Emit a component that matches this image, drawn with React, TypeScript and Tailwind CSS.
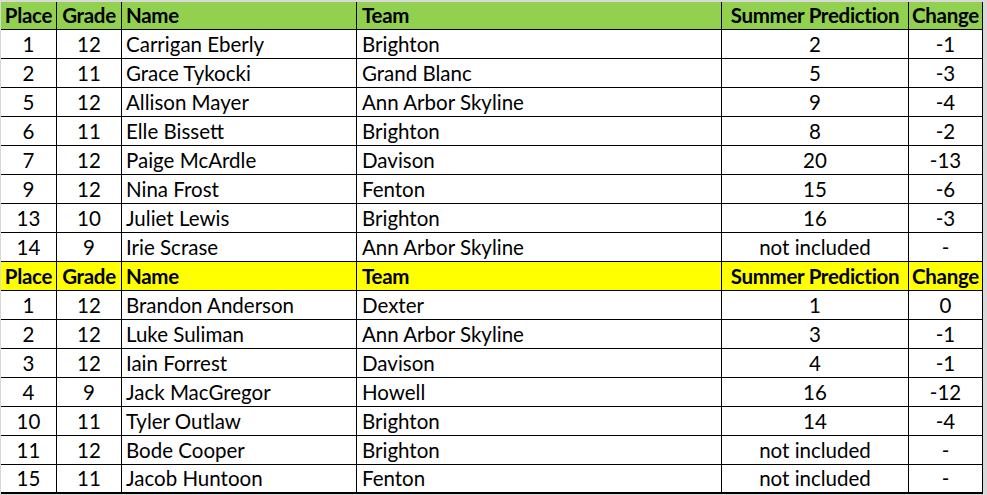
const GIRLS = [
  ["1", "12", "Carrigan Eberly", "Brighton", "2", "-1"],
  ["2", "11", "Grace Tykocki", "Grand Blanc", "5", "-3"],
  ["5", "12", "Allison Mayer", "Ann Arbor Skyline", "9", "-4"],
  ["6", "11", "Elle Bissett", "Brighton", "8", "-2"],
  ["7", "12", "Paige McArdle", "Davison", "20", "-13"],
  ["9", "12", "Nina Frost", "Fenton", "15", "-6"],
  ["13", "10", "Juliet Lewis", "Brighton", "16", "-3"],
  ["14", "9", "Irie Scrase", "Ann Arbor Skyline", "not included", "-"],
];

const BOYS = [
  ["1", "12", "Brandon Anderson", "Dexter", "1", "0"],
  ["2", "12", "Luke Suliman", "Ann Arbor Skyline", "3", "-1"],
  ["3", "12", "Iain Forrest", "Davison", "4", "-1"],
  ["4", "9", "Jack MacGregor", "Howell", "16", "-12"],
  ["10", "11", "Tyler Outlaw", "Brighton", "14", "-4"],
  ["11", "12", "Bode Cooper", "Brighton", "not included", "-"],
  ["15", "11", "Jacob Huntoon", "Fenton", "not included", "-"],
];

const HEAD = ["Place", "Grade", "Name", "Team", "Summer Prediction", "Change"];

// centred or left-aligned, like the sheet
const ALIGN = [
  "justify-center",
  "justify-center",
  "justify-start pl-1",
  "justify-start pl-[5px]",
  "justify-center",
  "justify-center",
];

function Row({
  cells,
  bg,
  bold,
  height,
  last,
}: {
  cells: string[];
  bg: string;
  bold?: boolean;
  height: string;
  last?: boolean;
}) {
  return (
    <div
      className={`grid grid-cols-[56px_65px_235px_365px_187px_74px] ${height} ${bg} border-black ${
        last ? "border-b-2" : "border-b"
      }`}
    >
      {cells.map((c, i) => (
        <div
          key={i}
          className={`flex items-end pb-[2px] whitespace-nowrap overflow-hidden border-r border-black ${ALIGN[i]} ${
            bold ? "font-bold tracking-[-0.3px]" : ""
          }`}
        >
          {c}
        </div>
      ))}
    </div>
  );
}

export default function App() {
  return (
    <div
      className="w-[987px] h-[495px] bg-[#d9d9d9] pt-[2px] pl-[1px] text-[20.5px] leading-[24px] text-black"
      style={{ fontFamily: "Lato, 'Liberation Sans', sans-serif" }}
    >
      <div className="w-[982px]">
        <Row cells={HEAD} bg="bg-[#92d050]" bold height="h-[28px]" />
        {GIRLS.map((r, i) => (
          <Row key={"g" + i} cells={r} bg="bg-white" height="h-[29px]" />
        ))}
        <Row cells={HEAD} bg="bg-[#ffff00]" bold height="h-[29px]" />
        {BOYS.map((r, i) => (
          <Row
            key={"b" + i}
            cells={r}
            bg="bg-white"
            height="h-[29px]"
            last={i === BOYS.length - 1}
          />
        ))}
      </div>
    </div>
  );
}
